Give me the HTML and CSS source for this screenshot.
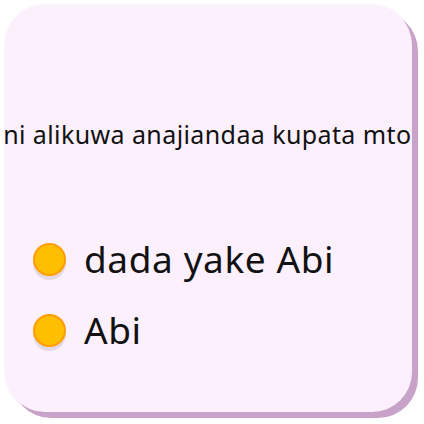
FILE: index.html
```html
<!DOCTYPE html>
<html>
<head>
<meta charset="utf-8">
<link rel="stylesheet" href="styles.css">
</head>
<body>
<div class="card">
  <div class="question">Nani alikuwa anajiandaa kupata mtoto?</div>
  <ul class="options">
    <li class="option"><span class="dot"></span><span class="label">dada yake Abi</span></li>
    <li class="option"><span class="dot"></span><span class="label">Abi</span></li>
  </ul>
</div>
</body>
</html>
```

FILE: styles.css
```css
html, body {
  margin: 0;
  padding: 0;
  background: #ffffff;
}
body {
  padding: 5px;
  width: 424px;
  height: 424px;
  box-sizing: border-box;
  font-family: "Noto Sans", "DejaVu Sans", sans-serif;
  color: #111111;
}
.card {
  width: 407px;
  height: 407px;
  box-sizing: border-box;
  background: #fcf0fd;
  border-radius: 40px;
  box-shadow: 6px 6px 0 #c9a2c9, 0 0 2px rgba(230, 210, 235, 0.6);
  overflow: hidden;
  display: flex;
  flex-direction: column;
  align-items: center;
  padding-top: 112px;
}
.question {
  font-size: 25px;
  letter-spacing: 0.4px;
  line-height: 34px;
  white-space: nowrap;
  text-align: center;
}
.options {
  list-style: none;
  margin: 84px 0 0 0;
  padding: 0 0 0 28px;
  align-self: stretch;
  display: flex;
  flex-direction: column;
  gap: 23px;
}
.option {
  display: flex;
  align-items: center;
  gap: 18px;
  height: 48px;
}
.dot {
  width: 29px;
  height: 29px;
  border-radius: 50%;
  background: #ffbf00;
  border: 2px solid #ff9d00;
  box-shadow: 0 4px 0 #e2d8e6;
  flex: none;
}
.label {
  font-size: 37px;
  letter-spacing: 0.6px;
  line-height: 48px;
}
```
